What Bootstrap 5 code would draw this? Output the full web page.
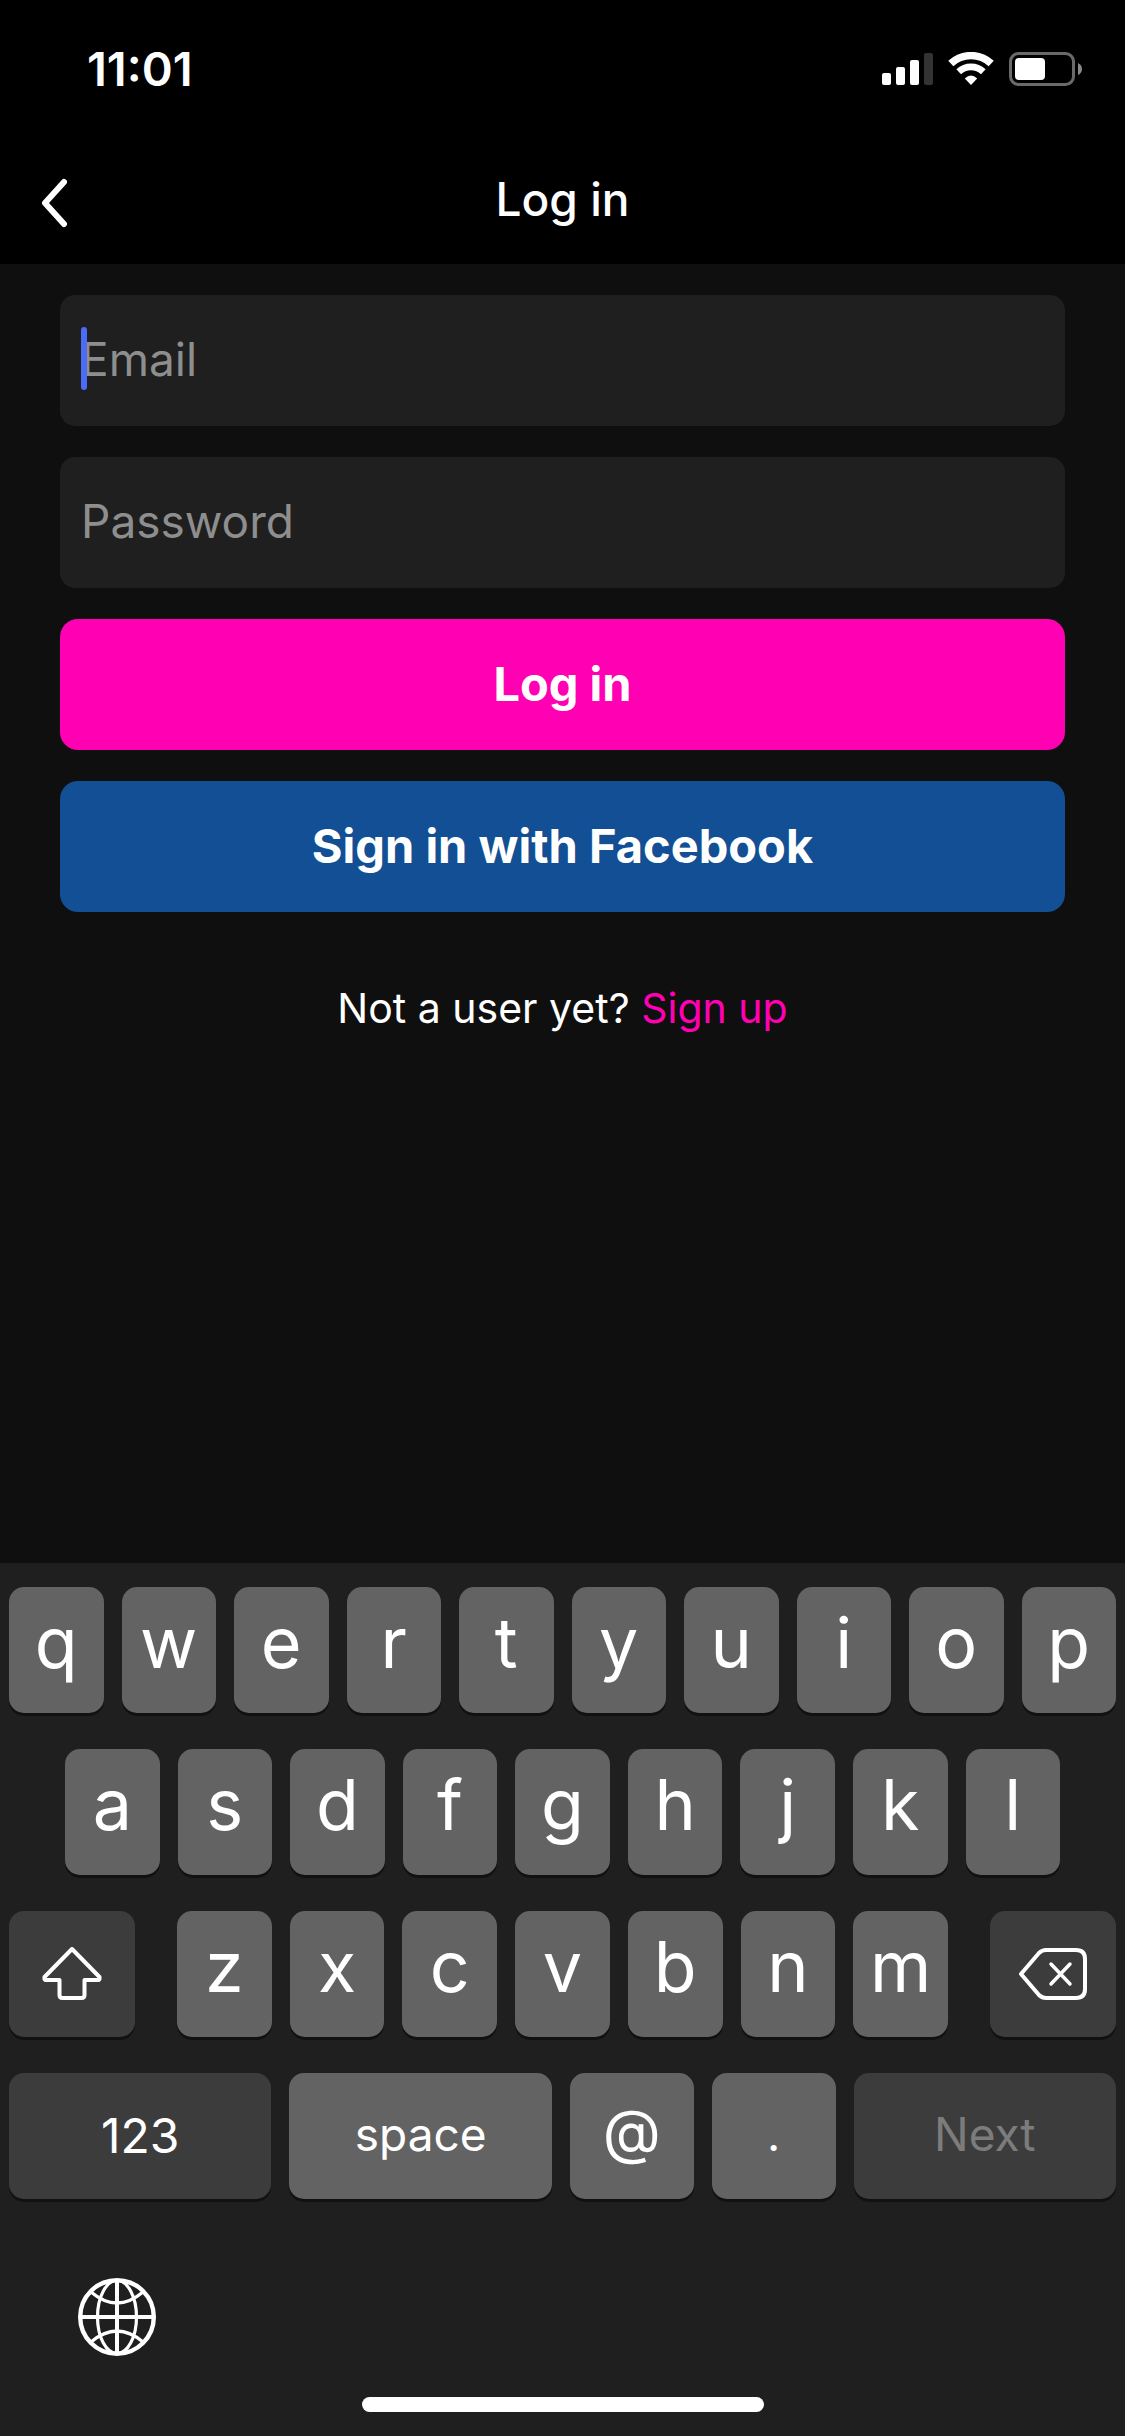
<!DOCTYPE html>
<html lang="en">
<head>
<meta charset="utf-8">
<meta name="viewport" content="width=device-width, initial-scale=1">
<title>Log in</title>
<link href="https://cdn.jsdelivr.net/npm/bootstrap@5.3.0/dist/css/bootstrap.min.css" rel="stylesheet">
<style>
  body { background: #0f0f0f; color: #fff; font-family: Inter, "Liberation Sans", sans-serif; font-size: 46px; line-height: 60px; }
  svg { display: block; flex: none; }

  .top-area { background: #000; }
  .status-bar { height: 138px; padding: 0 42px 0 87px; font-size: 47px; font-weight: 600; }
  .status-icons { gap: 14px; }
  .title-bar { height: 126px; padding: 0 40px; }
  .title-bar h1 { font-size: 46px; font-weight: 500; line-height: 60px; padding-bottom: 4px; }
  .side-slot { width: 60px; }

  .login-form { padding: 31px 60px; gap: 31px; }
  .field-box { height: 131px; padding: 0 21px 4px; border: 0; border-radius: 15px; background: #1f1f1f; color: #fff; font-size: 46px; }
  .field-box:focus { background: #1f1f1f; color: #fff; box-shadow: none; }
  .field-box::placeholder { color: #8e8e8e; opacity: 1; }
  .text-caret { left: 21px; top: 32px; width: 6px; height: 63px; border-radius: 3px; background: #4a6cf7; }
  .action-btn { height: 131px; padding: 0 0 1px; border: 0; border-radius: 18px; color: #fff; font-size: 47px; font-weight: 700; }
  .action-btn:hover { color: #fff; }
  .pink-btn, .pink-btn:hover { background: #ff00b3; }
  .blue-btn, .blue-btn:hover { background: #134f94; }
  .signup-line { font-size: 41px; padding-top: 35px; }
  .signup-line a { color: #ff00b3; }

  .keyboard { background: #1f1f1f; padding: 24px 9px; }
  .key-rows { gap: 36px; }
  .key-row { gap: 18px; }
  .key-row.inset { padding: 0 56px; }
  .letter-group { gap: 18px; margin: 0 24px; }
  .key { flex: 1 1 0; min-width: 0; height: 126px; padding: 0 0 14px; border: 0; border-radius: 15px; background: #636363; color: #fff; font-size: 70px; font-weight: 400; line-height: 84px; text-align: center; box-shadow: 0 3px 0 #111; }
  .key.word { padding-bottom: 4px; font-size: 46px; line-height: 60px; }
  .key.digits { padding-bottom: 0; font-size: 48px; }
  .key.at { padding-bottom: 10px; font-size: 60px; }
  .key.dark { background: #3c3c3c; }
  .key.square { flex: 0 0 126px; padding: 0; }
  .key.wide { flex-grow: 2.12; }
  .key:disabled { color: #7c7c7c; }
  .globe-btn { margin: 79px 0 0 69px; border: 0; background: none; padding: 0; }
  .home-bar { width: 402px; max-width: 60%; height: 15px; border-radius: 8px; margin-top: 41px; }
</style>
<script src="https://cdn.jsdelivr.net/npm/bootstrap@5.3.0/dist/js/bootstrap.bundle.min.js"></script>
</head>
<body>
<div class="d-flex flex-column min-vh-100">
  <header class="top-area">
    <div class="status-bar d-flex align-items-center justify-content-between">
      <span>11:01</span>
      <div class="status-icons d-flex align-items-center">
        <svg width="52" height="34" viewBox="0 0 52 34" fill="#fff" aria-label="Signal">
          <rect x="0" y="21" width="9" height="12" rx="2"/>
          <rect x="14" y="15" width="9" height="18" rx="2"/>
          <rect x="28" y="8" width="9" height="25" rx="2"/>
          <rect x="42" y="1" width="9" height="32" rx="2" fill="#333"/>
        </svg>
        <svg width="47" height="34" viewBox="0 0 47 34" fill="none" stroke="#fff" aria-label="Wi-Fi">
          <path d="M2.8 11.6A29.500 29.500 0 0 1 43.200 11.600" stroke-width="7.500"/>
          <path d="M10.700 19.800A18 18 0 0 1 35.300 19.800" stroke-width="6.800"/>
          <path d="M23 33L16.800 26.400Q23 20.800 29.200 26.400Z" fill="#fff" stroke="none"/>
        </svg>
        <svg width="74" height="34" viewBox="0 0 74 34" aria-label="Battery">
          <rect x="1.500" y="1.500" width="63" height="31" rx="8" fill="none" stroke="#6a6a6a" stroke-width="3"/>
          <rect x="6" y="6" width="30" height="22" rx="4" fill="#fff"/>
          <path d="M69 11Q73 13 73 17T69 23Z" fill="#8a8a8a"/>
        </svg>
      </div>
    </div>
    <nav class="title-bar d-flex align-items-center justify-content-between" aria-label="Page">
      <a href="#" class="side-slot" aria-label="Back">
        <svg width="30" height="54" viewBox="0 0 30 54" fill="none" stroke="#fff" stroke-width="6" stroke-linecap="round" stroke-linejoin="round"><path d="M24 8L5 29L24 50"/></svg>
      </a>
      <h1 class="m-0">Log in</h1>
      <span class="side-slot"></span>
    </nav>
  </header>

  <main>
    <form class="login-form d-flex flex-column">
      <div class="position-relative">
        <input type="email" class="form-control field-box" placeholder="Email" aria-label="Email">
        <span class="text-caret position-absolute"></span>
      </div>
      <input type="password" class="form-control field-box" placeholder="Password" aria-label="Password">
      <button type="button" class="btn action-btn pink-btn">Log in</button>
      <button type="button" class="btn action-btn blue-btn">Sign in with Facebook</button>
      <p class="signup-line text-center m-0">Not a user yet? <a href="#" class="text-decoration-none">Sign up</a></p>
    </form>
  </main>

  <section class="keyboard mt-auto" aria-label="Keyboard">
    <div class="key-rows d-flex flex-column">
      <div class="key-row d-flex">
        <button class="key">q</button><button class="key">w</button><button class="key">e</button><button class="key">r</button><button class="key">t</button><button class="key">y</button><button class="key">u</button><button class="key">i</button><button class="key">o</button><button class="key">p</button>
      </div>
      <div class="key-row inset d-flex">
        <button class="key">a</button><button class="key">s</button><button class="key">d</button><button class="key">f</button><button class="key">g</button><button class="key">h</button><button class="key">j</button><button class="key">k</button><button class="key">l</button>
      </div>
      <div class="key-row d-flex">
        <button class="key dark square d-flex align-items-center justify-content-center" aria-label="Shift">
          <svg width="60" height="54" viewBox="0 0 60 54" fill="none" stroke="#fff" stroke-width="4" stroke-linejoin="round"><path d="M30 2L2.500 30Q2 33 4 33H17.500V48Q17.500 51 20.500 51H39.500Q42.500 51 42.500 48V33H56Q58 33 57.500 30Z"/></svg>
        </button>
        <div class="letter-group d-flex flex-fill">
          <button class="key">z</button><button class="key">x</button><button class="key">c</button><button class="key">v</button><button class="key">b</button><button class="key">n</button><button class="key">m</button>
        </div>
        <button class="key dark square d-flex align-items-center justify-content-center" aria-label="Delete">
          <svg width="68" height="52" viewBox="0 0 68 52" fill="none" stroke="#fff" stroke-width="4" stroke-linejoin="round" stroke-linecap="round"><path d="M2 26L20 5Q23 2 27 2H57Q66 2 66 11V41Q66 50 57 50H27Q23 50 20 47Z"/><path d="M32 16L51 36M51 16L32 36" stroke-width="3.500"/></svg>
        </button>
      </div>
      <div class="key-row d-flex">
        <button class="key word digits dark wide">123</button>
        <button class="key word wide">space</button>
        <button class="key word at">@</button>
        <button class="key word">.</button>
        <button class="key word dark wide" disabled>Next</button>
      </div>
    </div>
    <button class="globe-btn d-block" aria-label="Change language">
      <svg width="78" height="78" viewBox="0 0 78 78" fill="none" stroke="#fff"><circle cx="39" cy="39" r="36.800" stroke-width="4.400"/><path d="M39 2V76M2 39H76" stroke-width="4"/><ellipse cx="39" cy="39" rx="19.500" ry="36.500" stroke-width="3.200"/><path d="M13 14Q39 36 65 14M13 64Q39 42 65 64" stroke-width="3.200"/></svg>
    </button>
    <div class="home-bar bg-white mx-auto"></div>
  </section>
</div>
</body>
</html>
